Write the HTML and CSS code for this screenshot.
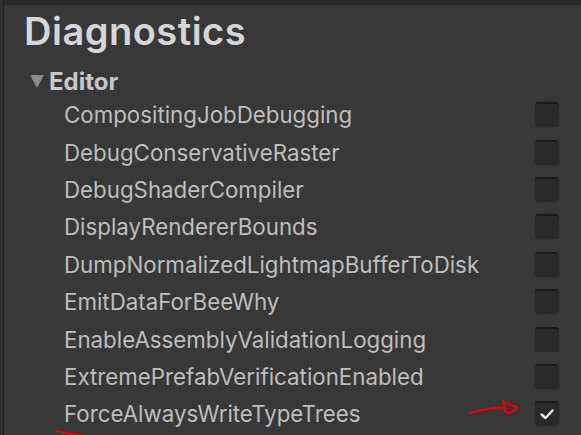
FILE: index.html
```html
<!DOCTYPE html>
<html>
<head>
<meta charset="utf-8">
<link rel="stylesheet" href="styles.css">
</head>
<body>
<div class="frame">
  <div class="gutter"></div>
  <div class="panel">
    <h1 class="title">Diagnostics</h1>
    <div class="group">
      <div class="group-head"><span class="tri"></span><span>Editor</span></div>
      <ul class="rows">
        <li class="row"><span>CompositingJobDebugging</span><span class="cb"></span></li>
        <li class="row"><span>DebugConservativeRaster</span><span class="cb"></span></li>
        <li class="row"><span>DebugShaderCompiler</span><span class="cb"></span></li>
        <li class="row"><span>DisplayRendererBounds</span><span class="cb"></span></li>
        <li class="row"><span>DumpNormalizedLightmapBufferToDisk</span><span class="cb"></span></li>
        <li class="row"><span>EmitDataForBeeWhy</span><span class="cb"></span></li>
        <li class="row"><span>EnableAssemblyValidationLogging</span><span class="cb"></span></li>
        <li class="row"><span>ExtremePrefabVerificationEnabled</span><span class="cb"></span></li>
        <li class="row"><span>ForceAlwaysWriteTypeTrees</span><span class="cb checked"><svg viewBox="0 0 24 24" width="24" height="24"><path d="M6.5 12.5 L10.5 16 L17.5 8.5" fill="none" stroke="#e6e6e6" stroke-width="2.4" stroke-linecap="round" stroke-linejoin="round"/></svg></span></li>
      </ul>
    </div>
  </div>
</div>
<svg class="mark-arrow" width="60" height="24" viewBox="0 0 60 24"><path d="M2 15 C12 12 22 10 36 9.5 M35 3 C38 8 36 14 40 15 C44 15 48 11 49 9 C44 8 40 6 35 3 C36 6 35 10 37 13" fill="none" stroke="#f00000" stroke-width="2" stroke-linecap="round" stroke-linejoin="round"/></svg>
<svg class="mark-low" width="30" height="6" viewBox="0 0 30 6"><path d="M1 1 C6 3 14 4 24 5" fill="none" stroke="#f00000" stroke-width="2" stroke-linecap="round"/></svg>
</body>
</html>
```
FILE: styles.css
```css
html, body {
  margin: 0;
  padding: 0;
  background: #383838;
  width: 581px;
  height: 435px;
  overflow: hidden;
  position: relative;
  font-family: Inter, "Noto Sans", sans-serif;
}
.frame {
  display: flex;
  height: 435px;
}
.gutter {
  width: 3px;
  background: #2f2f2f;
  border-right: 1px solid #202020;
  flex: none;
}
.panel {
  flex: 1;
  background: #383838;
  border-top: 4px solid #2a2a2a;
  box-shadow: inset 0 1px 0 #262626;
  padding: 0 0 0 20px;
}
.title {
  margin: 5px 0 0 0;
  font-size: 38px;
  font-weight: 600;
  color: #d6d6d6;
  letter-spacing: 0.5px;
  line-height: 44px;
}
.group {
  margin-top: 14px;
}
.group-head {
  display: flex;
  align-items: center;
  gap: 5px;
  padding-left: 6px;
  font-size: 24px;
  font-weight: 700;
  color: #c8c8c8;
  height: 28px;
}
.tri {
  width: 0;
  height: 0;
  border-left: 7.5px solid transparent;
  border-right: 7.5px solid transparent;
  border-top: 13px solid #8a8a8a;
}
.rows {
  list-style: none;
  margin: 0;
  padding: 0;
  margin-top: 1px;
}
.row {
  display: flex;
  justify-content: space-between;
  align-items: center;
  height: 37.4px;
  padding-left: 40px;
  padding-right: 22px;
  font-size: 22.3px;
  color: #bebebe;
}
.cb {
  width: 24px;
  height: 25px;
  border-radius: 4px;
  background: #2a2a2a;
  border-top: 2px solid #1a1a1a;
  box-sizing: border-box;
  box-shadow: 0 0 1px #202020;
  display: flex;
  align-items: center;
  justify-content: center;
}
.cb svg { margin-top: -2px; }
.mark-arrow {
  position: absolute;
  left: 468px;
  top: 398px;
}
.mark-low {
  position: absolute;
  left: 56px;
  top: 430px;
}
```
